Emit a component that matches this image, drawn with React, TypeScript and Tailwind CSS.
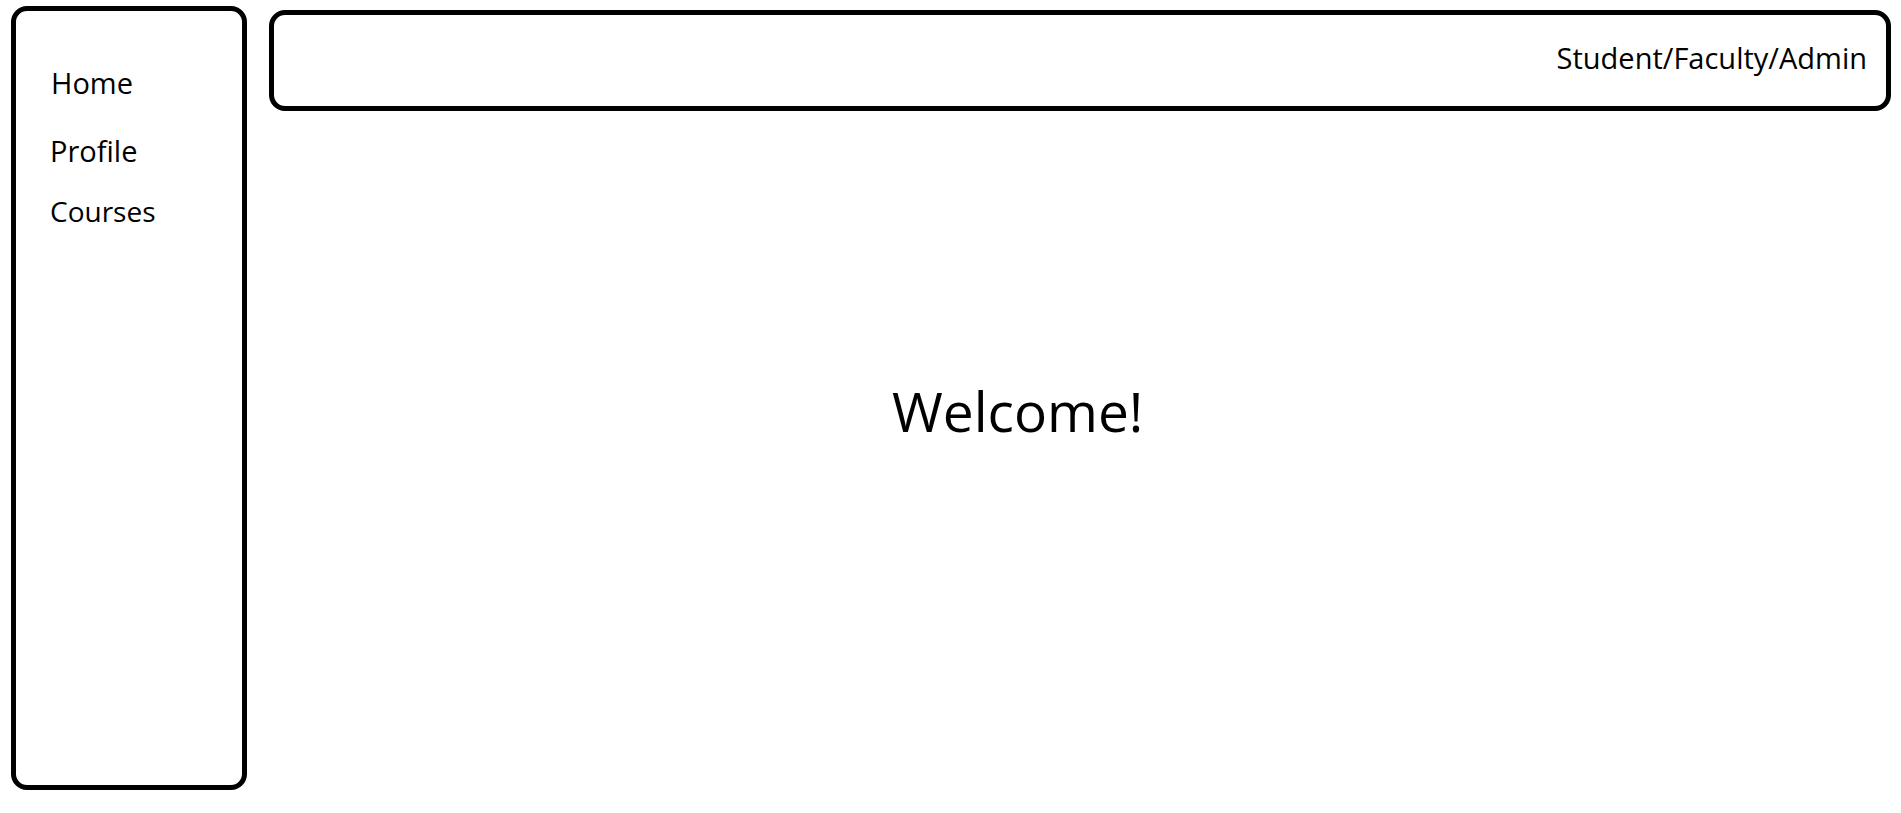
import React from 'react';

const navItems = [
  { label: 'Home', cls: 'mt-[50px] ml-[35px]' },
  { label: 'Profile', cls: 'mt-[24px] ml-[34px]' },
  { label: 'Courses', cls: 'mt-[18px] ml-[34px] text-[28px]' },
];

const App: React.FC = () => {
  return (
    <div
      className="flex w-full h-[813px] bg-white text-black overflow-hidden"
      style={{ fontFamily: '"Open Sans", "Noto Sans", sans-serif' }}
    >
      {/* Sidebar */}
      <div className="ml-[11px] mt-[6px] w-[236px] h-[784px] flex-shrink-0 border-[5px] border-black rounded-[16px] flex flex-col text-[29px]">
        {navItems.map((item) => (
          <div key={item.label} className={`${item.cls} leading-normal`}>
            {item.label}
          </div>
        ))}
      </div>

      {/* Main column */}
      <div className="flex-1 flex flex-col ml-[22px] mr-[10px]">
        <div className="mt-[10px] h-[101px] border-[5px] border-black rounded-[16px] flex justify-end pr-[19px] pt-[21px]">
          <span className="text-[29px] leading-normal h-fit">Student/Faculty/Admin</span>
        </div>

        <div className="mt-[259px] pl-[623px]">
          <h1 className="text-[55px] leading-normal font-normal">Welcome!</h1>
        </div>
      </div>
    </div>
  );
};

export default App;
